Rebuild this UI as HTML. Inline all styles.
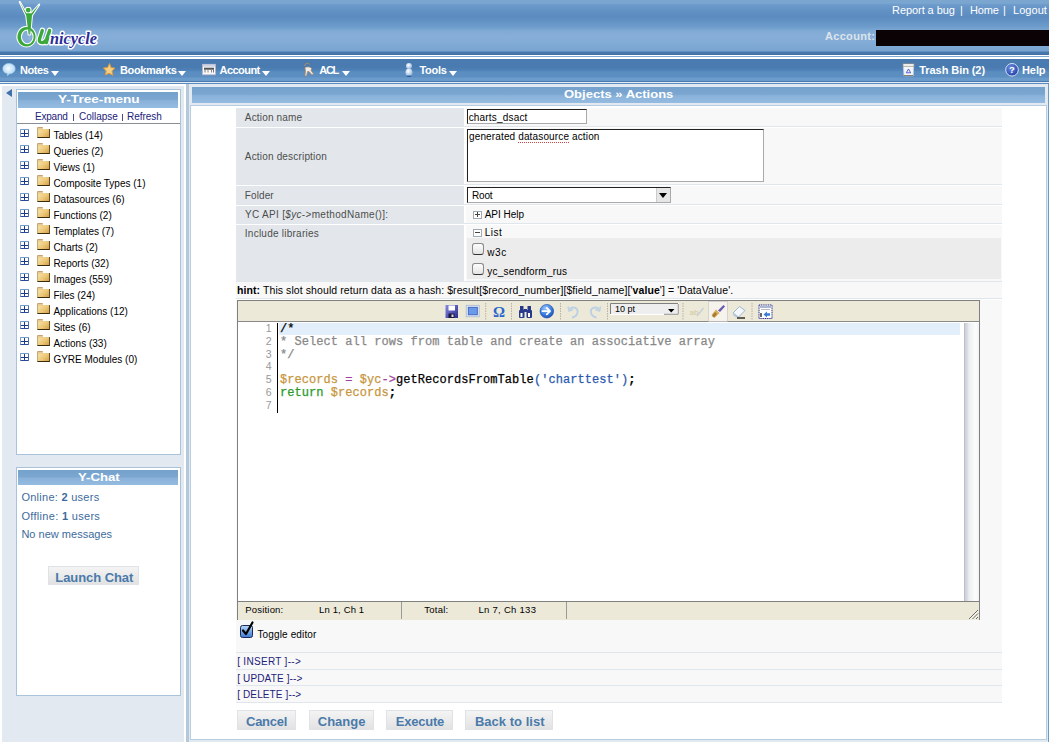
<!DOCTYPE html>
<html><head><meta charset="utf-8">
<style>

*{margin:0;padding:0;box-sizing:border-box}
html,body{width:1049px;height:742px;overflow:hidden;background:#fff;font-family:"Liberation Sans",sans-serif;position:relative}
.a{position:absolute}
#hdr{left:0;top:0;width:1049px;height:55px;background:linear-gradient(to bottom,#7ba6d0 0px,#7ba6d0 3px,#6c9acb 5px,#6392c5 10px,#5c8bc0 17px,#6494c6 22px,#6e9dcc 27px,#80aad5 31px,#86aed8 36px,#82abd6 43px,#78a5d0 51px,#4a7bb0 52px,#4574aa 54px,#3f6fa6 55px)}
#hl1{left:0;top:55px;width:1049px;height:1px;background:#fff}
#hl2{left:0;top:56px;width:1049px;height:1px;background:#7eaad6}
#hl3{left:0;top:57px;width:1049px;height:2px;background:#fff}
#menu{left:0;top:59px;width:1049px;height:23px;background:linear-gradient(to bottom,#4a7bb0 0px,#4a7bb0 8px,#4f81b6 11px,#5a8dc0 13px,#5c8ec1 18px,#6a9bca 19px,#6a9bca 22px,#4a7bb0 22px,#4a7bb0 23px)}
#ml1{left:0;top:82px;width:1049px;height:1px;background:#e6edf3}
#ml2{left:0;top:83px;width:1049px;height:1px;background:#5a8ac0}
.mi{color:#fff;font-weight:bold;font-size:11px;top:64px;white-space:nowrap}
.arr{width:0;height:0;border-left:4.5px solid transparent;border-right:4.5px solid transparent;border-top:5px solid #fff;top:71px}
.tl{color:#fff;font-size:12px;top:3px;white-space:nowrap}
#side{left:2px;top:86px;width:182px;height:656px;background:#e3e9f0}
#split{left:186px;top:84px;width:3px;height:658px;background:#b3c8da}
#mainbg{left:189px;top:84px;width:859px;height:658px;background:#e3e9f0}
#mainr{left:1048px;top:84px;width:1px;height:658px;background:#6a9ac8}
.phdr{background:linear-gradient(to bottom,#75a2cd 0%,#7aa6d0 45%,#8ab2da 55%,#95bbe0 100%);color:#fff;font-weight:bold;text-align:center}
.panel{background:#fff;border:1px solid #a9c3da}
.tree{font-size:11px;color:#000}
.ti{position:absolute;left:0;height:16px;white-space:nowrap}
.plus{position:absolute;width:9px;height:8px;border:1px solid #7a9ad0;border-bottom-color:#2a4a98;border-right-color:#4a6ab8;background:#fff;border-radius:1px}
.plus:before{content:"";position:absolute;left:0px;top:2.5px;width:7px;height:1px;background:#1a3a8a}
.plus:after{content:"";position:absolute;left:3px;top:0px;width:1px;height:6px;background:#1a3a8a}
.fold{position:absolute;width:13px;height:9px;background:linear-gradient(135deg,#f8e4ac 0%,#ecc878 55%,#d0a048 100%);border-right:1px solid #6a4a20;border-bottom:1px solid #3a2a10;border-left:1px solid #c8a878}
.fold:before{content:"";position:absolute;left:-1px;top:-2px;width:5px;height:2px;background:#e8cc90;border-top:1px solid #c8a070;border-left:1px solid #c8a878;border-radius:1px 1px 0 0}
#cont{left:190px;top:105px;width:857px;height:635px;background:#fff;border:1px solid #b9cde0}
.lbl{position:absolute;left:236px;width:228px;background:#e3e7eb;font-size:11px;color:#333;padding-left:9px}
.val{position:absolute;left:466px;width:536px;background:#f8f8f8}
.sep{position:absolute;left:236px;width:766px;height:1px;background:#dfe6ec}
.inp{position:absolute;background:#fff;border-top:1px solid #222;border-left:1px solid #222;border-right:1px solid #aaa;border-bottom:1px solid #aaa;font-size:11px;color:#000}
.code{font-family:"Liberation Mono",monospace;font-size:12px;white-space:pre;position:absolute;left:280px;line-height:12.75px;letter-spacing:0.05px;-webkit-text-stroke-width:0.25px}
.ln{font-family:"Liberation Sans",sans-serif;font-size:10.5px;position:absolute;left:240px;width:31.5px;text-align:right;color:#999;line-height:12.75px;white-space:pre}
.btn{position:absolute;top:710px;height:20px;background:linear-gradient(#f4f4f4,#e2e2e2);border:1px solid #dfe3e7;color:#4a7aaa;font-weight:bold;font-size:13px;text-align:center;line-height:19px}
.sb{font-size:11px;color:#000;position:absolute;top:603px}
.lnk{font-size:11px;color:#1a2a7a;position:absolute;left:237px}
.vt{font-size:10.5px;color:#000;white-space:nowrap}
.pm{width:9px;height:8px;border:1px solid #a0aab8;background:#fff}
.pm:before{content:"";position:absolute;left:1px;top:2.5px;width:5px;height:1px;background:#444}
.pv{position:absolute;left:3px;top:0.5px;width:1px;height:5px;background:#444}
.chk{width:12px;height:12px;border:1px solid #8a8a8a;border-bottom:1.5px solid #333;border-radius:3px;background:linear-gradient(#fdfdfd,#e4e4e4)}

.t{white-space:nowrap}

</style></head><body>
<div id="hdr" class="a"></div>
<div id="hl1" class="a"></div><div id="hl2" class="a"></div><div id="hl3" class="a"></div>
<div id="menu" class="a"></div><div id="ml1" class="a"></div><div id="ml2" class="a"></div>
<!-- logo -->
<svg class="a" style="left:0;top:0" width="110" height="55" viewBox="0 0 110 55">
<defs>
<g id="lgf">
<path d="M19.8 2 L26.2 13.2 L31.4 13.2 L39.2 4.6 L32 15.5 L30.2 34.5 L28.6 34.5 L26.2 15.5 Z"/>
<circle cx="28.2" cy="10.1" r="2.4"/>
<path fill-rule="evenodd" d="M26.5 27 A9.1 9.75 0 1 0 26.51 27 Z M27.3 29.4 A6.3 7.4 0 1 1 27.29 29.4 Z"/>
</g>
<g id="lgu">
<path d="M42.3 30.5 L39.6 38.8 Q38.6 42.6 42.2 42.6 Q45.2 42.6 46.8 38.6 L49.6 30.5 M49.6 30.5 L46.4 42.6"/>
</g>
</defs>
<use href="#lgf" fill="#fff" stroke="#fff" stroke-width="2" stroke-linejoin="round"/>
<use href="#lgu" fill="none" stroke="#fff" stroke-width="5.6" stroke-linejoin="round" stroke-linecap="round"/>
<use href="#lgf" fill="#3aa83a"/>
<use href="#lgu" fill="none" stroke="#3aa83a" stroke-width="3.4" stroke-linejoin="round" stroke-linecap="round"/>
<path d="M29 29 L29.4 40" stroke="#b8d0e6" stroke-width="0.6" opacity="0.7"/>
<text x="50" y="43.5" fill="#fff" stroke="#fff" stroke-width="3" stroke-linejoin="round" font-family="Liberation Serif" font-style="italic" font-weight="bold" font-size="17.5" textLength="47" lengthAdjust="spacingAndGlyphs">nicycle</text>
<text x="50" y="43.5" fill="#2b2d98" font-family="Liberation Serif" font-style="italic" font-weight="bold" font-size="17.5" textLength="47" lengthAdjust="spacingAndGlyphs">nicycle</text>
</svg>

<!-- top links -->
<div class="a t" style="left:892px;top:5px;font-size:11px;line-height:11px;letter-spacing:-0.066px;color:#fff">Report a bug</div>
<div class="a t" style="left:960px;top:5px;font-size:11px;line-height:11px;letter-spacing:-0.979px;color:#fff">|</div>
<div class="a t" style="left:970px;top:5px;font-size:11px;line-height:11px;letter-spacing:-0.155px;color:#fff">Home</div>
<div class="a t" style="left:1003px;top:5px;font-size:11px;line-height:11px;letter-spacing:-0.979px;color:#fff">|</div>
<div class="a t" style="left:1013px;top:5px;font-size:11px;line-height:11px;letter-spacing:0.045px;color:#fff">Logout</div>
<div class="a t" style="left:825px;top:31px;font-size:11px;line-height:11px;letter-spacing:0.315px;color:#dce4ec;font-weight:bold">Account:</div>
<div class="a" style="left:876px;top:30px;width:173px;height:16px;background:#0a0204"></div>
<!-- menu icons -->
<svg class="a" style="left:0;top:58px" width="24" height="24" viewBox="0 0 24 24">
<defs><radialGradient id="bub" cx="0.45" cy="0.4" r="0.6"><stop offset="0" stop-color="#f4fbff"/><stop offset="1" stop-color="#a9d4f2"/></radialGradient></defs>
<path d="M8.9 5.5 C13 5.5 15.2 8 15.2 10.7 C15.2 13.5 12.8 15.8 9.2 15.8 L7.5 18 L7.3 15.6 C4.6 15 2.8 13.2 2.8 10.7 C2.8 8 5 5.5 8.9 5.5 Z" fill="url(#bub)" stroke="#9fcaea" stroke-width="0.6"/>
</svg>
<svg class="a" style="left:98px;top:58px" width="24" height="24" viewBox="0 0 24 24">
<path d="M11.5 5.5 L13 9.6 L17 10.2 L14 13 L14.8 17.3 L11 15.2 L7.4 17 L8.2 13 L5.5 10 L9.6 9.5 Z" fill="#f3cf86" stroke="#e39a36" stroke-width="1" stroke-linejoin="round"/>
</svg>
<svg class="a" style="left:198px;top:58px" width="24" height="24" viewBox="0 0 24 24">
<rect x="4.5" y="6.3" width="13" height="10.5" fill="#fafafa" stroke="#b8b4c8" stroke-width="0.8"/>
<rect x="5" y="6.5" width="12" height="2.2" fill="#c8d4e4"/>
<rect x="6" y="9.7" width="10" height="2" fill="#555"/>
<rect x="6.5" y="11.5" width="1" height="3" fill="#777"/><rect x="9.5" y="11.5" width="1" height="3" fill="#888"/><rect x="13" y="11.5" width="1" height="3" fill="#888"/><rect x="15" y="11.5" width="1" height="3" fill="#777"/>
</svg>
<svg class="a" style="left:298px;top:58px" width="24" height="24" viewBox="0 0 24 24">
<path d="M6.5 8 C6.5 5 11.5 4.5 11.5 6.5" fill="none" stroke="#c08a50" stroke-width="0.9"/>
<path d="M7 10 C7 8.5 13 8.5 13.5 10.5 L13 12.5 L15.5 16 L14 16.8 L11 13.5 L9.5 13.5 L8.5 18 L7 18 L7.5 13 Z" fill="#f2ede4" stroke="#b08860" stroke-width="0.7"/>
</svg>
<svg class="a" style="left:398px;top:58px" width="24" height="24" viewBox="0 0 24 24">
<defs><radialGradient id="snw" cx="0.4" cy="0.35" r="0.7"><stop offset="0" stop-color="#ffffff"/><stop offset="1" stop-color="#8fb4dc"/></radialGradient></defs>
<circle cx="11" cy="8" r="3" fill="url(#snw)"/>
<ellipse cx="11" cy="14.3" rx="3.5" ry="3.8" fill="url(#snw)"/>
<ellipse cx="11" cy="18.3" rx="2.5" ry="0.7" fill="#2a5aa0"/>
</svg>
<svg class="a" style="left:900px;top:60px" width="18" height="20" viewBox="0 0 18 20">
<path d="M3.2 4.5 L13.8 4.5 L13.2 15.8 L4 15.8 Z" fill="#f2f5f9" stroke="#c8d0dc" stroke-width="0.7"/>
<rect x="3" y="3.8" width="11" height="2.4" fill="#f8f8fa" stroke="#8a7a6a" stroke-width="0.6"/>
<path d="M8.5 9 L10.7 12.8 L6.3 12.8 Z" fill="none" stroke="#5a5ad0" stroke-width="1" stroke-linejoin="round"/>
<rect x="4" y="15" width="9" height="1" fill="#8a8070"/>
</svg>
<svg class="a" style="left:1003px;top:61px" width="18" height="18" viewBox="0 0 18 18">
<defs><radialGradient id="hlp" cx="0.4" cy="0.35" r="0.7"><stop offset="0" stop-color="#6a8ee0"/><stop offset="1" stop-color="#1f3ea8"/></radialGradient></defs>
<circle cx="9" cy="8.8" r="6.3" fill="url(#hlp)" stroke="#dde6f4" stroke-width="1"/>
<text x="9" y="12.3" text-anchor="middle" font-family="Liberation Sans" font-weight="bold" font-size="9.5" fill="#fff">?</text>
</svg>

<!-- menu items -->
<div class="a t" style="left:20px;top:65px;font-size:11px;line-height:11px;letter-spacing:-0.421px;color:#fff;font-weight:bold">Notes</div><div class="a arr" style="left:51px"></div>
<div class="a t" style="left:120px;top:65px;font-size:11px;line-height:11px;letter-spacing:-0.380px;color:#fff;font-weight:bold">Bookmarks</div><div class="a arr" style="left:178px"></div>
<div class="a t" style="left:219.5px;top:65px;font-size:11px;line-height:11px;letter-spacing:-0.537px;color:#fff;font-weight:bold">Account</div><div class="a arr" style="left:262px"></div>
<div class="a t" style="left:319.3px;top:65px;font-size:11px;line-height:11px;letter-spacing:-1.315px;color:#fff;font-weight:bold">ACL</div><div class="a arr" style="left:341.5px"></div>
<div class="a t" style="left:419.4px;top:65px;font-size:11px;line-height:11px;letter-spacing:-0.259px;color:#fff;font-weight:bold">Tools</div><div class="a arr" style="left:448.5px"></div>
<div class="a t" style="left:919.3px;top:65px;font-size:11px;line-height:11px;letter-spacing:-0.070px;color:#fff;font-weight:bold">Trash Bin (2)</div>
<div class="a t" style="left:1022px;top:65px;font-size:11px;line-height:11px;letter-spacing:-0.088px;color:#fff;font-weight:bold">Help</div>

<div id="side" class="a"></div>
<div id="split" class="a"></div>
<div id="mainbg" class="a"></div>
<div id="mainr" class="a"></div>

<div class="a" style="left:6px;top:89px;width:0;height:0;border-top:4px solid transparent;border-bottom:4px solid transparent;border-right:6px solid #3f70a8"></div>

<!-- tree panel -->
<div class="a panel" style="left:16px;top:89px;width:165px;height:366px"></div>
<div class="a phdr" style="left:18px;top:92px;width:160px;height:16px"></div>
<div class="a t" style="left:58px;top:94px;font-size:11px;line-height:11px;transform-origin:0 0;transform:scaleX(1.2371);color:#fff;font-weight:bold;">Y-Tree-menu</div>
<div class="a t" style="left:35px;top:112px;font-size:10px;line-height:10px;letter-spacing:-0.224px;color:#22227a">Expand</div>
<div class="a" style="left:73px;top:114px;width:1px;height:7px;background:#4a4a8a"></div>
<div class="a t" style="left:79px;top:112px;font-size:10px;line-height:10px;letter-spacing:-0.017px;color:#22227a">Collapse</div>
<div class="a" style="left:121.5px;top:114px;width:1px;height:7px;background:#4a4a8a"></div>
<div class="a t" style="left:127px;top:112px;font-size:10px;line-height:10px;letter-spacing:-0.036px;color:#22227a">Refresh</div>
<div class="a" style="left:17px;top:123px;width:163px;height:1px;background:#8a8f96"></div>
<div class="a plus" style="left:20px;top:129px"></div><div class="a fold" style="left:37px;top:129px"></div><div class="a t" style="left:53.4px;top:130.7px;font-size:10px;line-height:10px;letter-spacing:0.000px;color:#000">Tables (14)</div>
<div class="a plus" style="left:20px;top:145px"></div><div class="a fold" style="left:37px;top:145px"></div><div class="a t" style="left:53.4px;top:146.7px;font-size:10px;line-height:10px;letter-spacing:0.000px;color:#000">Queries (2)</div>
<div class="a plus" style="left:20px;top:161px"></div><div class="a fold" style="left:37px;top:161px"></div><div class="a t" style="left:53.4px;top:162.7px;font-size:10px;line-height:10px;letter-spacing:0.000px;color:#000">Views (1)</div>
<div class="a plus" style="left:20px;top:177px"></div><div class="a fold" style="left:37px;top:177px"></div><div class="a t" style="left:53.4px;top:178.7px;font-size:10px;line-height:10px;letter-spacing:0.000px;color:#000">Composite Types (1)</div>
<div class="a plus" style="left:20px;top:193px"></div><div class="a fold" style="left:37px;top:193px"></div><div class="a t" style="left:53.4px;top:194.7px;font-size:10px;line-height:10px;letter-spacing:0.000px;color:#000">Datasources (6)</div>
<div class="a plus" style="left:20px;top:209px"></div><div class="a fold" style="left:37px;top:209px"></div><div class="a t" style="left:53.4px;top:210.7px;font-size:10px;line-height:10px;letter-spacing:0.000px;color:#000">Functions (2)</div>
<div class="a plus" style="left:20px;top:225px"></div><div class="a fold" style="left:37px;top:225px"></div><div class="a t" style="left:53.4px;top:226.7px;font-size:10px;line-height:10px;letter-spacing:0.000px;color:#000">Templates (7)</div>
<div class="a plus" style="left:20px;top:241px"></div><div class="a fold" style="left:37px;top:241px"></div><div class="a t" style="left:53.4px;top:242.7px;font-size:10px;line-height:10px;letter-spacing:0.000px;color:#000">Charts (2)</div>
<div class="a plus" style="left:20px;top:257px"></div><div class="a fold" style="left:37px;top:257px"></div><div class="a t" style="left:53.4px;top:258.7px;font-size:10px;line-height:10px;letter-spacing:0.000px;color:#000">Reports (32)</div>
<div class="a plus" style="left:20px;top:273px"></div><div class="a fold" style="left:37px;top:273px"></div><div class="a t" style="left:53.4px;top:274.7px;font-size:10px;line-height:10px;letter-spacing:0.000px;color:#000">Images (559)</div>
<div class="a plus" style="left:20px;top:289px"></div><div class="a fold" style="left:37px;top:289px"></div><div class="a t" style="left:53.4px;top:290.7px;font-size:10px;line-height:10px;letter-spacing:0.000px;color:#000">Files (24)</div>
<div class="a plus" style="left:20px;top:305px"></div><div class="a fold" style="left:37px;top:305px"></div><div class="a t" style="left:53.4px;top:306.7px;font-size:10px;line-height:10px;letter-spacing:0.000px;color:#000">Applications (12)</div>
<div class="a plus" style="left:20px;top:321px"></div><div class="a fold" style="left:37px;top:321px"></div><div class="a t" style="left:53.4px;top:322.7px;font-size:10px;line-height:10px;letter-spacing:0.000px;color:#000">Sites (6)</div>
<div class="a plus" style="left:20px;top:337px"></div><div class="a fold" style="left:37px;top:337px"></div><div class="a t" style="left:53.4px;top:338.7px;font-size:10px;line-height:10px;letter-spacing:0.000px;color:#000">Actions (33)</div>
<div class="a plus" style="left:20px;top:353px"></div><div class="a fold" style="left:37px;top:353px"></div><div class="a t" style="left:53.4px;top:354.7px;font-size:10px;line-height:10px;letter-spacing:0.000px;color:#000">GYRE Modules (0)</div>

<!-- chat panel -->
<div class="a panel" style="left:16px;top:467px;width:165px;height:229px"></div>
<div class="a phdr" style="left:18px;top:470px;width:160px;height:15px"></div>
<div class="a t" style="left:78.2px;top:471.5px;font-size:11px;line-height:11px;transform-origin:0 0;transform:scaleX(1.1983);color:#fff;font-weight:bold;">Y-Chat</div>
<div class="a t" style="left:21.4px;top:492.2px;font-size:11px;line-height:11px;letter-spacing:0.269px;color:#3d6b9c">Online: <b>2</b> users</div>
<div class="a t" style="left:21.4px;top:511px;font-size:11px;line-height:11px;letter-spacing:0.311px;color:#3d6b9c">Offline: <b>1</b> users</div>
<div class="a t" style="left:21.4px;top:529.3px;font-size:11px;line-height:11px;letter-spacing:0.013px;color:#3d6b9c">No new messages</div>
<div class="a btn" style="left:48px;top:566px;width:91px;height:19px"></div>
<div class="a t" style="left:55.3px;top:570.5px;font-size:13px;line-height:13px;letter-spacing:-0.069px;color:#4a7aaa;font-weight:bold">Launch Chat</div>

<!-- main header -->
<div class="a phdr" style="left:192px;top:87px;width:853px;height:16px"></div>
<div class="a t" style="left:564.4px;top:88.7px;font-size:11px;line-height:11px;transform-origin:0 0;transform:scaleX(1.1819);color:#fff;font-weight:bold;">Objects » Actions</div>
<div id="cont" class="a"></div>

<!-- form rows -->
<div class="lbl" style="top:108px;height:18px"></div>
<div class="val" style="top:108px;height:18px"></div>
<div class="sep" style="top:126px"></div>
<div class="a t" style="left:244.8px;top:113px;font-size:10px;line-height:10px;letter-spacing:0.171px;color:#4d4d4d">Action name</div>
<div class="inp" style="left:467px;top:109px;width:120px;height:15px"></div>
<div class="a t" style="left:468.7px;top:112.5px;font-size:10px;line-height:10px;letter-spacing:0.182px;color:#000">charts_dsact</div>

<div class="lbl" style="top:128px;height:56px"></div>
<div class="val" style="top:128px;height:56px"></div>
<div class="sep" style="top:184px"></div>
<div class="a t" style="left:244.8px;top:151.8px;font-size:10px;line-height:10px;letter-spacing:0.180px;color:#4d4d4d">Action description</div>
<div class="inp" style="left:467px;top:129px;width:297px;height:53px"></div>
<div class="a t" style="left:469px;top:131.8px;font-size:10px;line-height:10px;letter-spacing:0.139px;color:#000">generated <span style='border-bottom:1px dotted #c44'>datasource</span> action</div>

<div class="lbl" style="top:186px;height:18px"></div>
<div class="val" style="top:186px;height:18px"></div>
<div class="sep" style="top:204px"></div>
<div class="a t" style="left:244.8px;top:191px;font-size:10px;line-height:10px;letter-spacing:0.108px;color:#4d4d4d">Folder</div>
<div class="inp" style="left:467px;top:187px;width:204px;height:16px"></div>
<div class="a t" style="left:472px;top:191px;font-size:10px;line-height:10px;letter-spacing:-0.175px;color:#000">Root</div>
<div class="a" style="left:656px;top:188px;width:14px;height:14px;background:#e6e6e6;border-left:1px solid #ccc"></div>
<div class="a" style="left:659px;top:193px;width:0;height:0;border-left:4px solid transparent;border-right:4px solid transparent;border-top:5px solid #000"></div>

<div class="lbl" style="top:206px;height:17px"></div>
<div class="val" style="top:206px;height:17px"></div>
<div class="sep" style="top:223px"></div>
<div class="a t" style="left:244.9px;top:210px;font-size:10px;line-height:10px;letter-spacing:0.324px;color:#4d4d4d">YC API [<i>$yc</i>-&gt;methodName()]:</div>
<div class="a pm" style="left:473px;top:210.5px"><span class="pv"></span></div>
<div class="a t" style="left:484.7px;top:209.7px;font-size:10px;line-height:10px;letter-spacing:-0.024px;color:#000">API Help</div>

<div class="lbl" style="top:225px;height:56px"></div>
<div class="val" style="top:225px;height:56px"></div>
<div class="sep" style="top:281px"></div>
<div class="a t" style="left:244.8px;top:228.8px;font-size:10px;line-height:10px;letter-spacing:0.247px;color:#4d4d4d">Include libraries</div>
<div class="a pm" style="left:473px;top:228.5px"></div>
<div class="a t" style="left:484.7px;top:227.8px;font-size:10px;line-height:10px;letter-spacing:0.479px;color:#000">List</div>
<div class="a" style="left:467px;top:238px;width:534px;height:41px;background:#ececec"></div>
<div class="a chk" style="left:472px;top:243px"></div>
<div class="a t" style="left:487.3px;top:247.8px;font-size:10px;line-height:10px;letter-spacing:0.552px;color:#000">w3c</div>
<div class="a chk" style="left:472px;top:263px"></div>
<div class="a t" style="left:487.3px;top:267.2px;font-size:10px;line-height:10px;letter-spacing:0.214px;color:#000">yc_sendform_rus</div>

<div class="a" style="left:236px;top:282px;width:766px;height:16px;background:#f8f8f8"></div>
<div class="sep" style="top:298px"></div>
<div class="a t" style="left:237px;top:285.3px;font-size:10.5px;line-height:10.5px;letter-spacing:0.081px;color:#000"><b>hint:</b> This slot should return data as a hash: $result[$record_number][$field_name]['<b>value</b>'] = 'DataValue'.</div>

<!-- editor -->
<div class="a" style="left:236px;top:300px;width:766px;height:320px;background:#f8f8f8"></div>
<div class="a" style="left:237px;top:300px;width:743px;height:320px;border:1px solid #808080;border-bottom:none;background:#fff"></div>
<div class="a" style="left:238px;top:301px;width:741px;height:21px;background:#ece9d8;border-bottom:1px solid #8a8a8a"></div>
<!-- toolbar icons -->
<svg class="a" style="left:440px;top:300px" width="340" height="22" viewBox="440 300 340 22">
<defs>
<linearGradient id="flp" x1="0" y1="0" x2="1" y2="1"><stop offset="0" stop-color="#8a8ae0"/><stop offset="1" stop-color="#2a2a90"/></linearGradient>
<radialGradient id="cir" cx="0.4" cy="0.3" r="0.75"><stop offset="0" stop-color="#9ac8ff"/><stop offset="0.6" stop-color="#3a7ee0"/><stop offset="1" stop-color="#1a4ab0"/></radialGradient>
</defs>
<!-- floppy -->
<rect x="445.5" y="305" width="12.5" height="13" fill="url(#flp)"/>
<rect x="448.5" y="305.5" width="6.5" height="5" fill="#fff"/>
<rect x="448.5" y="313.5" width="6" height="4.5" fill="#1a1a40"/>
<rect x="451.5" y="314.5" width="2" height="2.5" fill="#ddd"/>
<!-- fullscreen -->
<rect x="466.2" y="305.3" width="13" height="11.5" fill="#dde6f2" stroke="#a8b8d0" stroke-width="0.8"/>
<rect x="468.3" y="307.3" width="9" height="7.5" fill="#6a9ae8" stroke="#3a5ab8" stroke-width="0.8"/>
<!-- separators -->
<g stroke="#b8b0a0" stroke-width="1" stroke-dasharray="1.5 1">
<line x1="485.7" y1="303" x2="485.7" y2="320"/>
<line x1="511.5" y1="303" x2="511.5" y2="320"/>
<line x1="560.5" y1="303" x2="560.5" y2="320"/>
<line x1="607.5" y1="303" x2="607.5" y2="320"/>
<line x1="683" y1="303" x2="683" y2="320"/>
<line x1="752" y1="303" x2="752" y2="320"/>
</g>
<!-- omega -->
<text x="499" y="317" text-anchor="middle" font-family="Liberation Serif" font-weight="bold" font-size="15" fill="#2a66cc">Ω</text>
<!-- binoculars -->
<g fill="#2a3a8a">
<rect x="519" y="310" width="5.5" height="8" rx="1"/><rect x="526.5" y="310" width="5.5" height="8" rx="1"/>
<rect x="520" y="306" width="3.5" height="5"/><rect x="527.5" y="306" width="3.5" height="5"/>
<rect x="523.5" y="309" width="3.5" height="3"/>
</g>
<rect x="520.5" y="313" width="2" height="4" fill="#fff"/><rect x="528" y="313" width="2" height="4" fill="#fff"/>
<!-- circle arrow -->
<circle cx="546.8" cy="311.2" r="6.8" fill="url(#cir)" stroke="#1a4aa8" stroke-width="0.6"/>
<path d="M542.5 311.2 L549.5 311.2 M546.8 308 L550 311.2 L546.8 314.4" stroke="#fff" stroke-width="1.8" fill="none" stroke-linecap="round" stroke-linejoin="round"/>
<!-- undo/redo faded -->
<path d="M569.5 309 C573 306 578.5 308 577.5 312.5 C577 315.5 574.5 317 572 317.5" stroke="#bcd0e4" stroke-width="1.8" fill="none"/>
<path d="M568 306.5 L569 311 L573 309.5" stroke="#bcd0e4" stroke-width="1.5" fill="none"/>
<path d="M599 309 C595.5 306 590 308 591 312.5 C591.5 315.5 594 317 596.5 317.5" stroke="#bcd0e4" stroke-width="1.8" fill="none"/>
<path d="M600.5 306.5 L599.5 311 L595.5 309.5" stroke="#bcd0e4" stroke-width="1.5" fill="none"/>
<!-- select 10pt -->
<rect x="610" y="303" width="69" height="12" fill="#eeeeee"/>
<path d="M610.5 315 L610.5 303.5 L678.5 303.5" stroke="#808080" stroke-width="1" fill="none"/>
<path d="M610 314.5 L679 314.5 M678.5 303 L678.5 315" stroke="#fff" stroke-width="1" fill="none"/>
<path d="M664 314.3 L678.3 314.3 L678.3 304" stroke="#777" stroke-width="0.8" fill="none"/>
<path d="M668 309 L674.5 309 L671.2 312.5 Z" fill="#000"/>
<text x="615" y="312" font-family="Liberation Sans" font-size="9" fill="#000">10 pt</text>
<!-- abc faded -->
<text x="689.5" y="315" font-family="Liberation Sans" font-size="8" fill="#d0c8a0">ab</text>
<path d="M697 316 L703.5 308" stroke="#c8d0d8" stroke-width="1.5"/>
<!-- highlight box + brush -->
<rect x="708.5" y="301.5" width="19" height="20" fill="#f5f3ec" stroke="#a8a8b8" stroke-width="0.8" stroke-dasharray="1 1"/>
<path d="M711.5 315 L716 309.5 L719.5 313 L714.5 318 Z" fill="#d8b060"/>
<path d="M712 316 L715 312 L717 314 L714 317.5 Z" fill="#a87830"/>
<path d="M718 310.5 L723.5 305 L725 306.5 L720 312 Z" fill="#6a5ab0"/>
<!-- eraser -->
<path d="M733 313 L739.5 306.5 L745 310.5 L738.5 317 Z" fill="#f4f8fc" stroke="#8aa8c8" stroke-width="0.8"/>
<path d="M733 313 L738.5 317 L736 317.5 L733 315 Z" fill="#b8c8dc"/>
<line x1="737" y1="318" x2="745" y2="318" stroke="#000" stroke-width="1.2"/>
<!-- doc icon -->
<rect x="759" y="305" width="13" height="13.5" fill="#fff" stroke="#30308a" stroke-width="1" stroke-dasharray="1.2 0.6"/>
<rect x="760" y="306" width="11" height="2" fill="#aab8d8"/>
<line x1="761" y1="309.5" x2="770" y2="309.5" stroke="#aab" stroke-width="0.8"/>
<line x1="761" y1="313" x2="761" y2="317" stroke="#000" stroke-width="1.2"/>
<path d="M763.5 314.5 L767 311.5 L767 313.3 L770 313.3 L770 315.7 L767 315.7 L767 317.5 Z" fill="#3a7ad8"/>
</svg>

<div class="a" style="left:279px;top:323px;width:681px;height:12px;background:#e2effa"></div>
<div class="a" style="left:277px;top:323px;width:1px;height:90px;background:#000"></div>
<div class="ln" style="top:322px">1
2
3
4
5
6
7</div>
<div class="code" style="top:323px"><span style="color:#000">/*</span>
<span style="color:#888">* Select all rows from table and create an associative array</span>
<span style="color:#888">*/</span>

<span style="color:#c8963e">$records</span> <span style="color:#a040a0">=</span> <span style="color:#c8963e">$yc</span><span style="color:#a040a0">-&gt;</span><span style="color:#000">getRecordsFromTable</span><span style="color:#2a5ab0">('charttest')</span><b>;</b>
<span style="color:#2a9a2a">return</span> <span style="color:#c8963e">$records</span><b>;</b></div>
<div class="a" style="left:964px;top:323px;width:15px;height:278px;background:linear-gradient(to right,#b4c0d4 0px,#b4c0d4 1px,#cfd2d8 1px,#d8d8dc 3px,#eceef2 5px,#f6f7f8 9px,#fdfdfd 12px,#f4f2f6 14px)"></div>
<div class="a" style="left:237px;top:601px;width:743px;height:19px;background:#ece9d8;border-left:1px solid #808080;border-right:1px solid #808080;border-top:1px solid #808080"></div>
<svg class="a" style="left:966px;top:606px" width="13" height="14" viewBox="0 0 13 14"><g stroke="#6a6a6a" stroke-width="1"><line x1="3" y1="13" x2="12" y2="4"/><line x1="6.5" y1="13" x2="12" y2="7.5"/><line x1="10" y1="13" x2="12" y2="11"/></g><g stroke="#fff" stroke-width="0.8"><line x1="4" y1="13.5" x2="12.5" y2="5"/><line x1="7.5" y1="13.5" x2="12.5" y2="8.5"/></g></svg>
<div class="a" style="left:401px;top:602px;width:1px;height:17px;background:#9a9a9a"></div>
<div class="a" style="left:566px;top:602px;width:1px;height:17px;background:#9a9a9a"></div>
<div class="a t" style="left:245.2px;top:605px;font-size:9.5px;line-height:9.5px;letter-spacing:0.203px;color:#000">Position:</div>
<div class="a t" style="left:319.1px;top:605px;font-size:9.5px;line-height:9.5px;letter-spacing:0.135px;color:#000">Ln 1, Ch 1</div>
<div class="a t" style="left:424.2px;top:605px;font-size:9.5px;line-height:9.5px;letter-spacing:0.268px;color:#000">Total:</div>
<div class="a t" style="left:478.4px;top:605px;font-size:9.5px;line-height:9.5px;letter-spacing:0.287px;color:#000">Ln 7, Ch 133</div>

<div class="a" style="left:236px;top:620px;width:766px;height:83px;background:#f8f8f8"></div>
<svg class="a" style="left:239px;top:621px" width="16" height="17" viewBox="0 0 16 17"><defs><linearGradient id="cbg" x1="0" y1="0" x2="0" y2="1"><stop offset="0" stop-color="#b8d8f8"/><stop offset="1" stop-color="#3a78d0"/></linearGradient></defs><rect x="1.5" y="4.5" width="12" height="12" rx="2" fill="url(#cbg)" stroke="#1a2a5a" stroke-width="1"/><path d="M4 9.5 L7 13 L13.5 1.5" stroke="#000" stroke-width="2.2" fill="none" stroke-linecap="round" stroke-linejoin="round"/></svg>
<div class="a t" style="left:257.4px;top:629.8px;font-size:10px;line-height:10px;letter-spacing:0.145px;color:#000">Toggle editor</div>
<div class="sep" style="top:652px"></div>
<div class="a t" style="left:237.2px;top:657.3px;font-size:10px;line-height:10px;letter-spacing:0.307px;color:#22227a">[ INSERT ]--&gt;</div>
<div class="sep" style="top:669px"></div>
<div class="a t" style="left:237.2px;top:674.4px;font-size:10px;line-height:10px;letter-spacing:0.147px;color:#22227a">[ UPDATE ]--&gt;</div>
<div class="sep" style="top:685px"></div>
<div class="a t" style="left:237.2px;top:690px;font-size:10px;line-height:10px;letter-spacing:0.124px;color:#22227a">[ DELETE ]--&gt;</div>
<div class="sep" style="top:702px"></div>

<div class="btn" style="left:237px;width:59px"></div>
<div class="a t" style="left:246px;top:715px;font-size:13px;line-height:13px;letter-spacing:-0.260px;color:#4a7aaa;font-weight:bold">Cancel</div>
<div class="btn" style="left:309px;width:65px"></div>
<div class="a t" style="left:317.8px;top:715px;font-size:13px;line-height:13px;letter-spacing:-0.006px;color:#4a7aaa;font-weight:bold">Change</div>
<div class="btn" style="left:386px;width:67px"></div>
<div class="a t" style="left:395.8px;top:715px;font-size:13px;line-height:13px;letter-spacing:-0.239px;color:#4a7aaa;font-weight:bold">Execute</div>
<div class="btn" style="left:465px;width:88px"></div>
<div class="a t" style="left:474.9px;top:715px;font-size:13px;line-height:13px;letter-spacing:0.026px;color:#4a7aaa;font-weight:bold">Back to list</div>

</body></html>
